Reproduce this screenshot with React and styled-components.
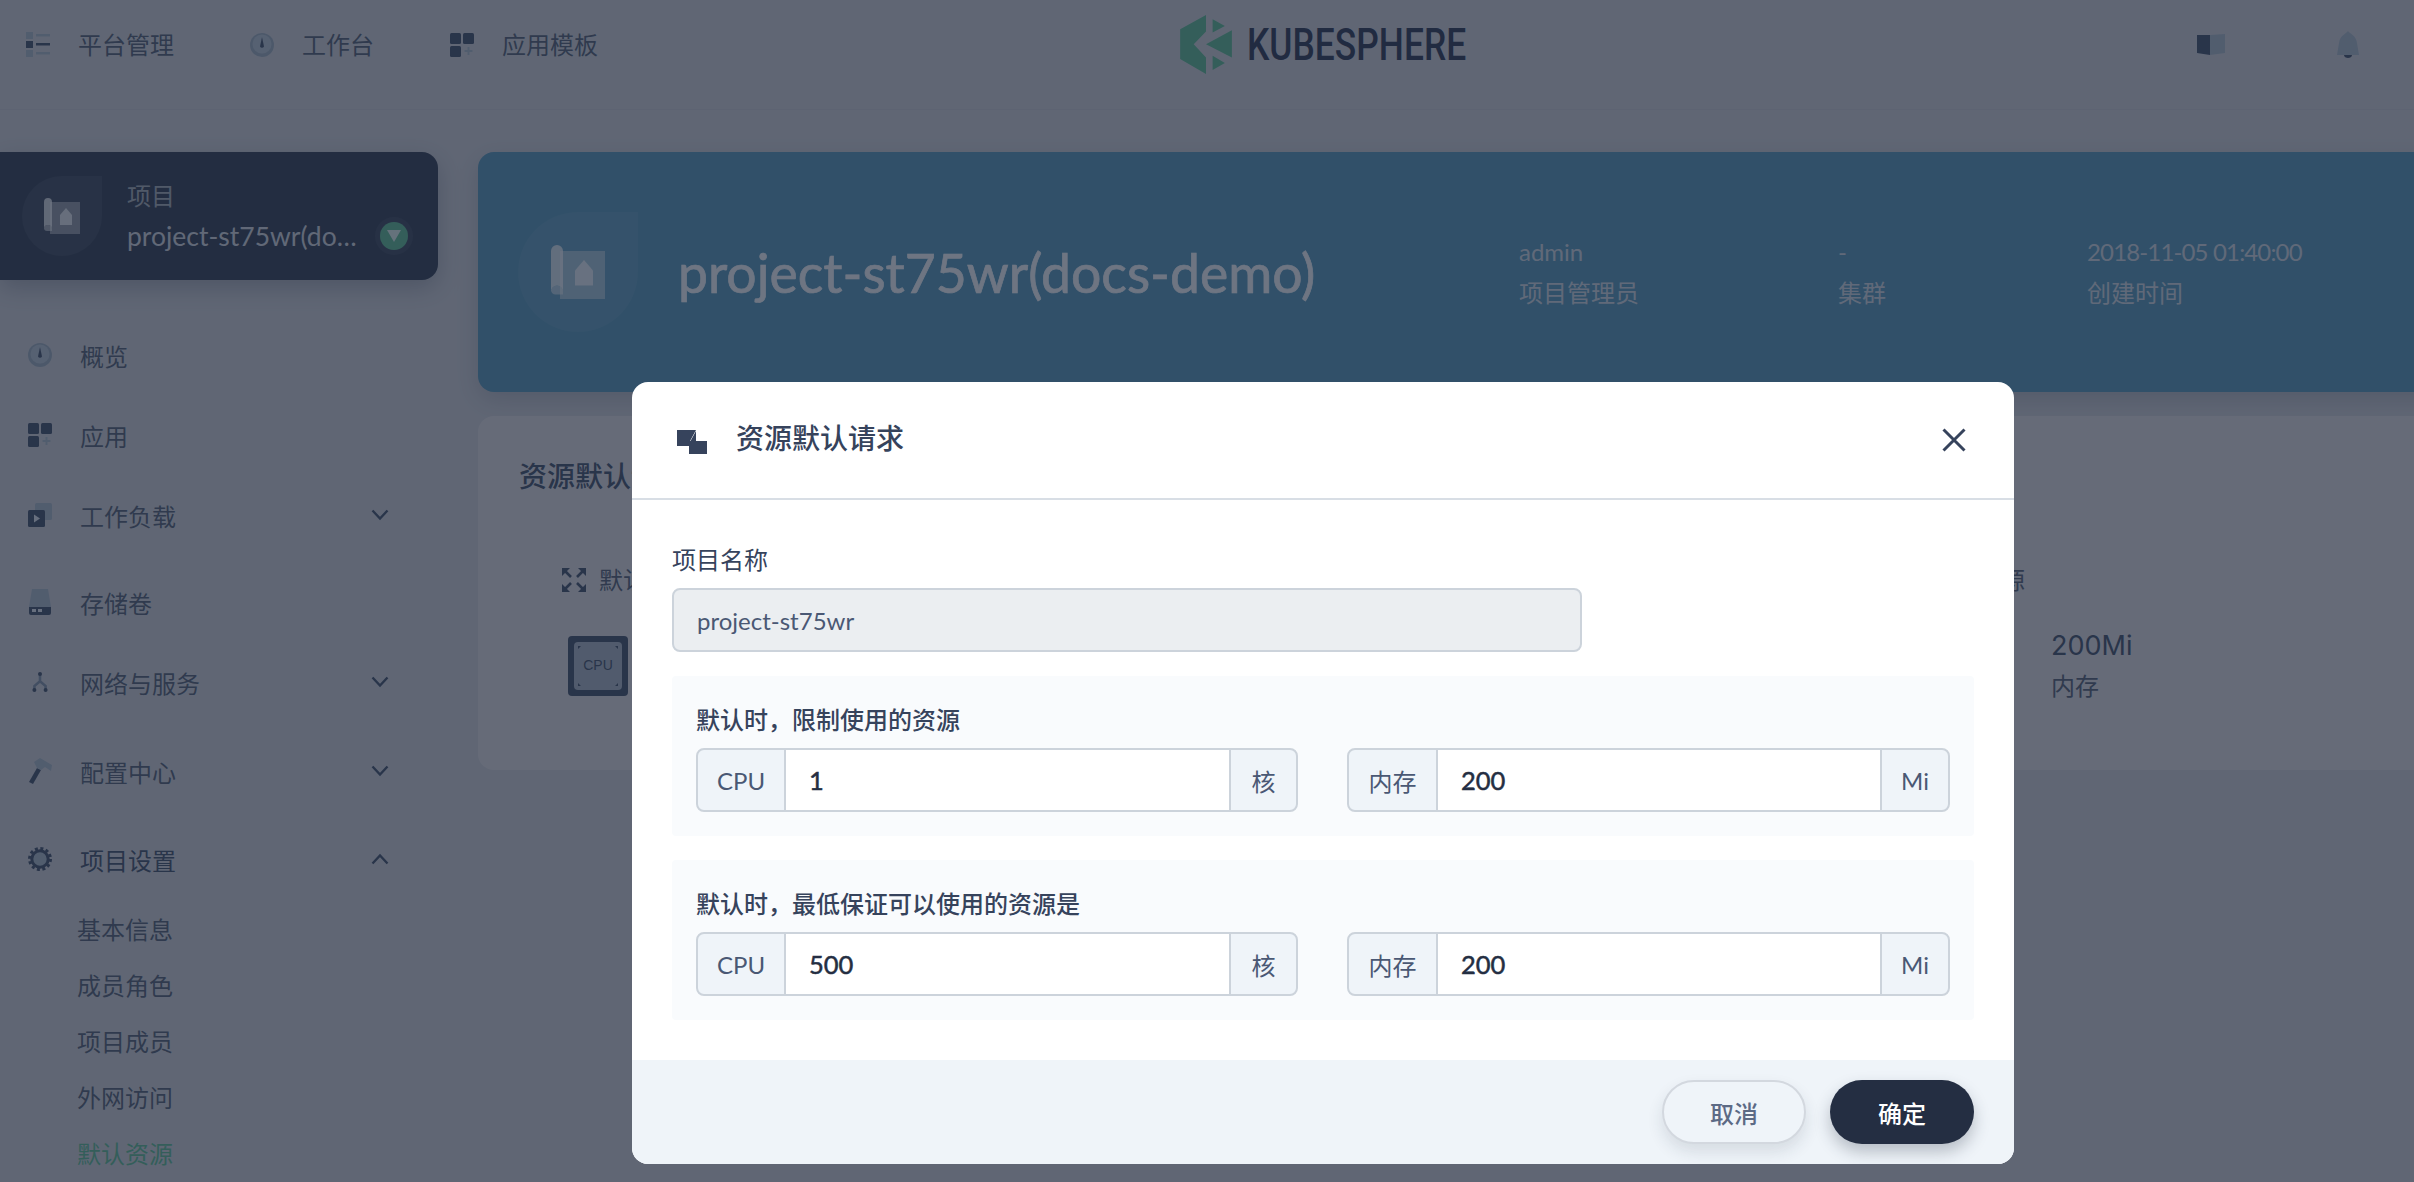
import React from "react";
import styled, { createGlobalStyle } from "styled-components";

const FONT = `Lato, "Noto Sans CJK SC", sans-serif`;
const GREEN = "#55bc8a";
const DARK = "#36435c";
const LIGHT = "#abb8c5";

const Global = createGlobalStyle`
  html, body { margin: 0; padding: 0; overflow: hidden; width: 2414px; height: 1182px; }
  * { box-sizing: border-box; }
`;

const Page = styled.div`
  position: relative;
  width: 2646px;
  height: 1182px;
  overflow: hidden;
  background: #d6d4d7;
  color: #4a5468;
  font-family: ${FONT};
  font-size: 24px;
`;

const Header = styled.header`
  display: grid;
  grid-template-columns: 1fr auto 1fr;
  align-items: center;
  height: 110px;
  padding: 0 26px 20px;
  border-bottom: 1px solid #cdcbd0;
`;
const TopNav = styled.nav`
  display: flex;
  gap: 76px;
`;
const TopItem = styled.div`
  display: flex;
  align-items: center;
  gap: 28px;
  line-height: 32px;
`;
const Logo = styled.div`
  display: flex;
  align-items: center;
  gap: 15px;
`;
const LogoText = styled.div`
  width: 219px;
  font-family: Roboto, sans-serif;
  font-size: 44.5px;
  font-weight: 500;
  line-height: 60px;
  color: #1f2740;
  white-space: nowrap;
  transform: scaleX(0.795);
  transform-origin: left center;
`;
const TopRight = styled.div`
  display: flex;
  justify-content: flex-end;
  align-items: center;
  gap: 112px;
  padding-right: 261px;
`;

const Layout = styled.div`
  display: flex;
  gap: 40px;
  padding: 42px 40px 0 0;
`;
const Sidebar = styled.aside`
  flex: 0 0 438px;
  width: 438px;
  min-width: 0;
`;
const ProjectCard = styled.div`
  display: flex;
  align-items: center;
  height: 128px;
  padding: 0 30px 0 22px;
  gap: 25px;
  margin-bottom: 35px;
  background: #242e42;
  border-radius: 0 16px 16px 0;
  box-shadow: 0 8px 24px rgba(36, 46, 66, 0.3);
  color: #fff;
`;
const Drop = styled.div`
  flex: none;
  display: flex;
  align-items: center;
  justify-content: center;
  width: ${(p) => p.$size}px;
  height: ${(p) => p.$size}px;
  border-radius: 50% 0 50% 50%;
  background: rgba(255, 255, 255, 0.07);
`;
const ProjectText = styled.div`
  flex: 1;
  min-width: 0;
`;
const ProjectKind = styled.div`
  line-height: 40px;
  color: #a8acb4;
`;
const ProjectNameRow = styled.div`
  display: flex;
  align-items: center;
  gap: 12px;
  line-height: 40px;
`;
const ProjectName = styled.div`
  flex: 1;
  min-width: 0;
  overflow: hidden;
  white-space: nowrap;
  text-overflow: ellipsis;
  font-size: 26.5px;
  color: #d8dade;
`;
const SwitchButton = styled.div`
  flex: none;
  display: flex;
  align-items: center;
  justify-content: center;
  width: 28px;
  height: 28px;
  border-radius: 50%;
  background: ${GREEN};
  box-shadow: 0 0 0 5px rgba(255, 255, 255, 0.06);
`;
const NavItem = styled.div`
  display: flex;
  align-items: center;
  height: 80px;
  margin-top: ${(p) => p.$top || 0}px;
  padding: 0 49px 0 28px;
  gap: 28px;
  color: ${(p) => (p.$strong ? "#36435c" : "#4a5468")};
`;
const NavLabel = styled.span`
  flex: 1;
`;
const SubItem = styled.div`
  display: flex;
  align-items: center;
  height: 56px;
  padding-left: 77px;
  color: ${(p) => (p.$active ? GREEN : "#4a5468")};
`;
const SubList = styled.div`
  margin-top: 1px;
`;

const Main = styled.main`
  flex: 1;
  min-width: 0;
`;
const Hero = styled.section`
  display: flex;
  align-items: center;
  height: 240px;
  padding-left: 40px;
  border-radius: 16px;
  background: #4c93b6;
  box-shadow: 0 8px 24px rgba(36, 46, 66, 0.2);
  color: #fff;
`;
const HeroTitle = styled.h1`
  flex: 0 0 841px;
  margin: 0 0 0 40px;
  font-size: 53.5px;
  font-weight: 400;
  line-height: 64px;
  white-space: nowrap;
  -webkit-text-stroke: 0.7px currentColor;
`;
const HeroMeta = styled.div`
  flex: 0 0 ${(p) => p.$width}px;
  color: #d7dde3;
  line-height: 41px;
`;
const HeroDate = styled.div`
  letter-spacing: -0.85px;
`;
const ContentCard = styled.section`
  height: 354px;
  margin-top: 24px;
  padding: 40px 40px 0 41px;
  border-radius: 16px;
  background: #e8e2e2;
`;
const CardTitle = styled.h2`
  margin: 0 0 40px;
  font-size: 28px;
  font-weight: 500;
  line-height: 40px;
  color: #36435c;
`;
const Panel = styled.div`
  display: flex;
  height: 193px;
  padding: 32px 0 0 43px;
  border-radius: 8px;
  background: #e6e0e1;
`;
const PanelSection = styled.div`
  flex: 0 0 ${(p) => p.$width}px;
`;
const PanelHead = styled.div`
  display: flex;
  align-items: center;
  gap: 13px;
  line-height: 24px;
`;
const Stats = styled.div`
  display: grid;
  grid-template-columns: 216px auto;
  margin-top: 34px;
  padding-left: ${(p) => p.$inset || 0}px;
`;
const Stat = styled.div`
  display: flex;
  align-items: center;
  gap: 51px;
`;
const StatValue = styled.div`
  font-family: Inter, sans-serif;
  font-size: 27px;
  line-height: 40px;
  color: #36435c;
`;
const StatLabel = styled.div`
  line-height: 40px;
`;

const Overlay = styled.div`
  position: absolute;
  inset: 0;
  display: flex;
  justify-content: center;
  align-items: flex-start;
  padding-top: 382px;
  background: rgba(35, 45, 65, 0.66);
`;
const Modal = styled.div`
  display: flex;
  flex-direction: column;
  width: 1382px;
  height: 782px;
  border-radius: 16px;
  overflow: hidden;
  background: #fff;
  color: #36435c;
`;
const ModalHeader = styled.div`
  flex: none;
  display: flex;
  align-items: center;
  gap: 29px;
  height: 118px;
  padding: 0 48px 0 45px;
  border-bottom: 2px solid #d8dee5;
`;
const ModalTitle = styled.div`
  flex: 1;
  margin-top: -4px;
  font-size: 28px;
  font-weight: 500;
  line-height: 40px;
  color: #36435c;
`;
const ModalBody = styled.div`
  flex: 1;
  padding: 44px 40px 0;
`;
const FieldLabel = styled.div`
  line-height: 32px;
  margin-bottom: 12px;
`;
const NameInput = styled.input`
  display: block;
  width: 910px;
  height: 64px;
  padding: 0 23px;
  border: 2px solid #ccd3db;
  border-radius: 8px;
  outline: none;
  background: #ebeef1;
  color: #4a5874;
  font-family: ${FONT};
  font-size: 24px;
`;
const Group = styled.div`
  height: 160px;
  margin-top: 24px;
  padding: 28px 24px 0;
  border-radius: 4px;
  background: #f9fbfd;
`;
const GroupLabel = styled.div`
  margin-bottom: 12px;
  font-weight: 500;
  line-height: 32px;
`;
const GroupRow = styled.div`
  display: grid;
  grid-template-columns: 602px 603px;
  gap: 49px;
`;
const InputGroup = styled.div`
  display: flex;
  height: 64px;
  border: 2px solid #ccd3db;
  border-radius: 8px;
  overflow: hidden;
  background: #eff4f9;
`;
const Addon = styled.div`
  flex: 0 0 ${(p) => p.$width}px;
  display: flex;
  align-items: center;
  justify-content: center;
  color: #4a5874;
`;
const ValueInput = styled.input`
  flex: 1;
  min-width: 0;
  padding: 0 23px;
  border: 0;
  border-left: 2px solid #ccd3db;
  border-right: 2px solid #ccd3db;
  outline: none;
  background: #fff;
  color: #242e42;
  font-family: ${FONT};
  font-size: 25.5px;
  font-weight: 400;
  -webkit-text-stroke: 0.5px #242e42;
`;
const ModalFooter = styled.div`
  flex: none;
  display: flex;
  justify-content: flex-end;
  align-items: flex-start;
  gap: 24px;
  height: 104px;
  padding: 20px 40px 0;
  background: #eff4f9;
`;
const Button = styled.button`
  width: 144px;
  height: 64px;
  border: ${(p) => (p.$primary ? "0" : "2px solid #d3d8df")};
  border-radius: 32px;
  background: ${(p) => (p.$primary ? "#242e42" : "#eff4f9")};
  color: ${(p) => (p.$primary ? "#fff" : "#5c6a85")};
  box-shadow: 0 8px 16px rgba(36, 46, 66, ${(p) => (p.$primary ? 0.28 : 0.12)});
  font-family: ${FONT};
  font-size: 24px;
  font-weight: 500;
`;

const Svg = ({ w = 24, h = 24, vb, children }) => (
  <svg width={w} height={h} viewBox={vb || `0 0 ${w} ${h}`} style={{ flex: "none", display: "block" }}>
    {children}
  </svg>
);

const ListIcon = () => (
  <Svg w={24} h={25}>
    <rect x="0" y="0" width="7" height="7" fill={LIGHT} />
    <rect x="10" y="2" width="14" height="2.5" fill={LIGHT} />
    <rect x="0" y="9" width="7" height="7" fill={DARK} />
    <rect x="10" y="11" width="14" height="2.5" fill={DARK} />
    <rect x="0" y="18" width="7" height="7" fill={LIGHT} />
    <rect x="10" y="20" width="14" height="2.5" fill={LIGHT} />
  </Svg>
);
const GaugeIcon = () => (
  <Svg w={24} h={24}>
    <circle cx="12" cy="12" r="12" fill="#9dabb9" />
    <circle cx="12" cy="11" r="9.5" fill="#b9c5d0" />
    <path d="M12 4 L14 13.5 A2.2 2.2 0 0 1 10 13.5 Z" fill={DARK} />
  </Svg>
);
const AppIcon = () => (
  <Svg w={24} h={24}>
    <rect x="0" y="0" width="11" height="11" rx="1.5" fill={DARK} />
    <rect x="13" y="0" width="11" height="11" rx="1.5" fill={DARK} />
    <rect x="0" y="13" width="11" height="11" rx="1.5" fill={DARK} />
    <path d="M17.5 14h2v3h3v2h-3v3h-2v-3h-3v-2h3z" fill={LIGHT} />
  </Svg>
);
const WorkloadIcon = () => (
  <Svg w={24} h={24}>
    <rect x="7" y="0" width="17" height="17" rx="1.5" fill={LIGHT} />
    <rect x="0" y="7" width="17" height="17" rx="1.5" fill={DARK} />
    <path d="M6 11.5 L12 15.5 L6 19.5 Z" fill="#e9eef2" />
  </Svg>
);
const StorageIcon = () => (
  <Svg w={24} h={26} vb="-1 0 24 26">
    <path d="M3 0 H19 L22 18 H0 Z" fill={LIGHT} />
    <path d="M0 18 H22 V24 a2 2 0 0 1 -2 2 H2 a2 2 0 0 1 -2 -2 Z" fill={DARK} />
    <rect x="3" y="20" width="4" height="3" fill="#e9eef2" />
    <rect x="9" y="20" width="4" height="3" fill="#e9eef2" />
  </Svg>
);
const NetworkIcon = () => (
  <Svg w={24} h={26} vb="-3 -3 30 32">
    <path d="M12 4 V12 M12 12 L5 18 V23 M12 12 L19 18 V23" fill="none" stroke="#7f8ea0" strokeWidth="3.2" />
    <circle cx="12" cy="3" r="2.5" fill={DARK} />
    <circle cx="5" cy="23" r="2.5" fill={DARK} />
    <circle cx="19" cy="23" r="2.5" fill={DARK} />
  </Svg>
);
const HammerIcon = () => (
  <Svg w={24} h={26}>
    <path d="M9 10 L13 12 L5 26 L1 24 Z" fill={DARK} />
    <path d="M6 4 L12 0 L24 7 L23 13 L17 9 L13 12 L9 10 Z" fill={LIGHT} />
  </Svg>
);
const GearIcon = () => (
  <Svg w={24} h={24}>
    <circle cx="12" cy="12" r="8.2" fill={LIGHT} stroke={DARK} strokeWidth="3" />
    <circle cx="12" cy="12" r="10.5" fill="none" stroke={DARK} strokeWidth="3" strokeDasharray="3 2.5" />
  </Svg>
);
const Chevron = ({ up }) => (
  <Svg w={18} h={12}>
    <path d={up ? "M1.5 10.5 L9 2.5 L16.5 10.5" : "M1.5 1.5 L9 9.5 L16.5 1.5"} fill="none" stroke={DARK} strokeWidth="2.4" />
  </Svg>
);
const ProjectIcon = ({ size }) => (
  <Svg w={size} h={size} vb="0 0 36 36">
    <rect x="6" y="4" width="30" height="32" fill="#fff" opacity="0.45" />
    <path d="M0 4 a4 4 0 0 1 8 0 V31 a4 4 0 0 0 -8 0 Z" fill="#fff" opacity="0.8" />
    <path d="M0 31 a4 4 0 0 1 8 0 v2 H3 a3 3 0 0 1 -3 -3 Z" fill="#fff" opacity="0.55" />
    <path d="M16 27 V17 L22 10 L28 17 V27 Z" fill="#fff" opacity="0.8" />
  </Svg>
);
const ExpandIcon = () => (
  <Svg w={24} h={24}>
    <path d="M2 2 L9 9 M2 22 L9 15 M22 2 L15 9 M22 22 L15 15" stroke={DARK} strokeWidth="2.6" fill="none" />
    <path d="M0 0 H8 L0 8 Z M24 0 H16 L24 8 Z M0 24 H8 L0 16 Z M24 24 H16 L24 16 Z" fill={DARK} />
  </Svg>
);
const ChipIcon = ({ label }) => (
  <Svg w={60} h={60}>
    <rect width="60" height="60" rx="4" fill={DARK} />
    <rect x="6" y="6" width="48" height="48" rx="4" fill="#aab4c0" />
    <text x="30" y="34" textAnchor="middle" fontFamily="Liberation Sans, sans-serif" fontSize="14" fill="#36435c">{label}</text>
    <path d="M10 10 l3 0 l-3 3 Z M50 10 l-3 0 l3 3 Z M10 50 l3 0 l-3 -3 Z M50 50 l-3 0 l3 -3 Z" fill={DARK} />
  </Svg>
);
const QuotaIcon = () => (
  <Svg w={30} h={28} vb="0 -4 30 28">
    <path d="M0 0 H19 L13 11 H12 V16 H0 Z" fill={DARK} />
    <path d="M13.5 11 L19 1 V11 H30 V24 H12 V11 Z" fill={DARK} />
  </Svg>
);
const BookIcon = () => (
  <Svg w={28} h={21}>
    <path d="M0 1 L13 1 V21 L0 19 Z" fill={DARK} />
    <path d="M13 1 L28 0 V19 L13 21 Z" fill={LIGHT} />
  </Svg>
);
const BellIcon = () => (
  <Svg w={22} h={27}>
    <path d="M11 0 C13 3 19 4 20 12 L22 24 H0 L2 12 C3 4 9 3 11 0 Z" fill={LIGHT} />
    <path d="M7 24 H15 C15 28 7 28 7 24 Z" fill={DARK} />
  </Svg>
);
const LogoMark = () => (
  <Svg w={52} h={59} vb="87 42 156 178">
    <g fill={GREEN}>
      <polygon points="87,85 165,42 165,92 128,130 165,170 165,220 87,175" />
      <polygon points="185,55 222,75 185,95" />
      <polygon points="243,88 243,170 165,130" />
      <polygon points="185,165 222,187 185,208" />
    </g>
  </Svg>
);

const NAV = [
  { label: "概览", Icon: GaugeIcon },
  { label: "应用", Icon: AppIcon },
  { label: "工作负载", Icon: WorkloadIcon, chevron: "down" },
  { label: "存储卷", Icon: StorageIcon, top: 7 },
  { label: "网络与服务", Icon: NetworkIcon, chevron: "down" },
  { label: "配置中心", Icon: HammerIcon, chevron: "down", top: 9 },
  { label: "项目设置", Icon: GearIcon, chevron: "up", top: 8, strong: true },
];
const SUBS = ["基本信息", "成员角色", "项目成员", "外网访问", "默认资源"];

const LimitGroup = ({ label, cpu, mem }) => (
  <Group>
    <GroupLabel>{label}</GroupLabel>
    <GroupRow>
      <InputGroup>
        <Addon $width={86}>CPU</Addon>
        <ValueInput readOnly value={cpu} />
        <Addon $width={65}>核</Addon>
      </InputGroup>
      <InputGroup>
        <Addon $width={87}>内存</Addon>
        <ValueInput readOnly value={mem} />
        <Addon $width={66}>Mi</Addon>
      </InputGroup>
    </GroupRow>
  </Group>
);

export default function App() {
  return (
    <Page>
      <Global />
      <Header>
        <TopNav>
          <TopItem><ListIcon />平台管理</TopItem>
          <TopItem><GaugeIcon />工作台</TopItem>
          <TopItem><AppIcon />应用模板</TopItem>
        </TopNav>
        <Logo>
          <LogoMark />
          <LogoText>KUBESPHERE</LogoText>
        </Logo>
        <TopRight>
          <BookIcon />
          <BellIcon />
        </TopRight>
      </Header>
      <Layout>
        <Sidebar>
          <ProjectCard>
            <Drop $size={80}><ProjectIcon size={36} /></Drop>
            <ProjectText>
              <ProjectKind>项目</ProjectKind>
              <ProjectNameRow>
                <ProjectName>project-st75wr(docs-demo)</ProjectName>
                <SwitchButton>
                  <Svg w={14} h={12}><path d="M0 0 H14 L7 12 Z" fill="#fff" opacity="0.85" /></Svg>
                </SwitchButton>
              </ProjectNameRow>
            </ProjectText>
          </ProjectCard>
          {NAV.map(({ label, Icon, chevron, top, strong }) => (
            <NavItem key={label} $top={top} $strong={strong}>
              <Icon />
              <NavLabel>{label}</NavLabel>
              {chevron && <Chevron up={chevron === "up"} />}
            </NavItem>
          ))}
          <SubList>
            {SUBS.map((s) => (
              <SubItem key={s} $active={s === "默认资源"}>{s}</SubItem>
            ))}
          </SubList>
        </Sidebar>
        <Main>
          <Hero>
            <Drop $size={120}><ProjectIcon size={54} /></Drop>
            <HeroTitle>project-st75wr(docs-demo)</HeroTitle>
            <HeroMeta $width={319}><div>admin</div><div>项目管理员</div></HeroMeta>
            <HeroMeta $width={249}><div>-</div><div>集群</div></HeroMeta>
            <HeroMeta $width={300}><HeroDate>2018-11-05 01:40:00</HeroDate><div>创建时间</div></HeroMeta>
          </Hero>
          <ContentCard>
            <CardTitle>资源默认请求</CardTitle>
            <Panel>
              <PanelSection $width={1162}>
                <PanelHead><ExpandIcon />默认限制使用的资源</PanelHead>
                <Stats $inset={6}>
                  <Stat>
                    <ChipIcon label="CPU" />
                    <div><StatValue>1 Core</StatValue><StatLabel>CPU</StatLabel></div>
                  </Stat>
                </Stats>
              </PanelSection>
              <PanelSection $width={500}>
                <PanelHead><ExpandIcon />默认最低保证使用的资源</PanelHead>
                <Stats>
                  <Stat>
                    <ChipIcon label="CPU" />
                    <div><StatValue>500m</StatValue><StatLabel>CPU</StatLabel></div>
                  </Stat>
                  <Stat>
                    <ChipIcon label="MEM" />
                    <div><StatValue>200Mi</StatValue><StatLabel>内存</StatLabel></div>
                  </Stat>
                </Stats>
              </PanelSection>
            </Panel>
          </ContentCard>
        </Main>
      </Layout>
      <Overlay>
        <Modal>
          <ModalHeader>
            <QuotaIcon />
            <ModalTitle>资源默认请求</ModalTitle>
            <Svg w={24} h={24}>
              <path d="M1.5 1.5 L22.5 22.5 M22.5 1.5 L1.5 22.5" stroke={DARK} strokeWidth="3" />
            </Svg>
          </ModalHeader>
          <ModalBody>
            <FieldLabel>项目名称</FieldLabel>
            <NameInput readOnly value="project-st75wr" />
            <LimitGroup label="默认时，限制使用的资源" cpu="1" mem="200" />
            <LimitGroup label="默认时，最低保证可以使用的资源是" cpu="500" mem="200" />
          </ModalBody>
          <ModalFooter>
            <Button>取消</Button>
            <Button $primary>确定</Button>
          </ModalFooter>
        </Modal>
      </Overlay>
    </Page>
  );
}
